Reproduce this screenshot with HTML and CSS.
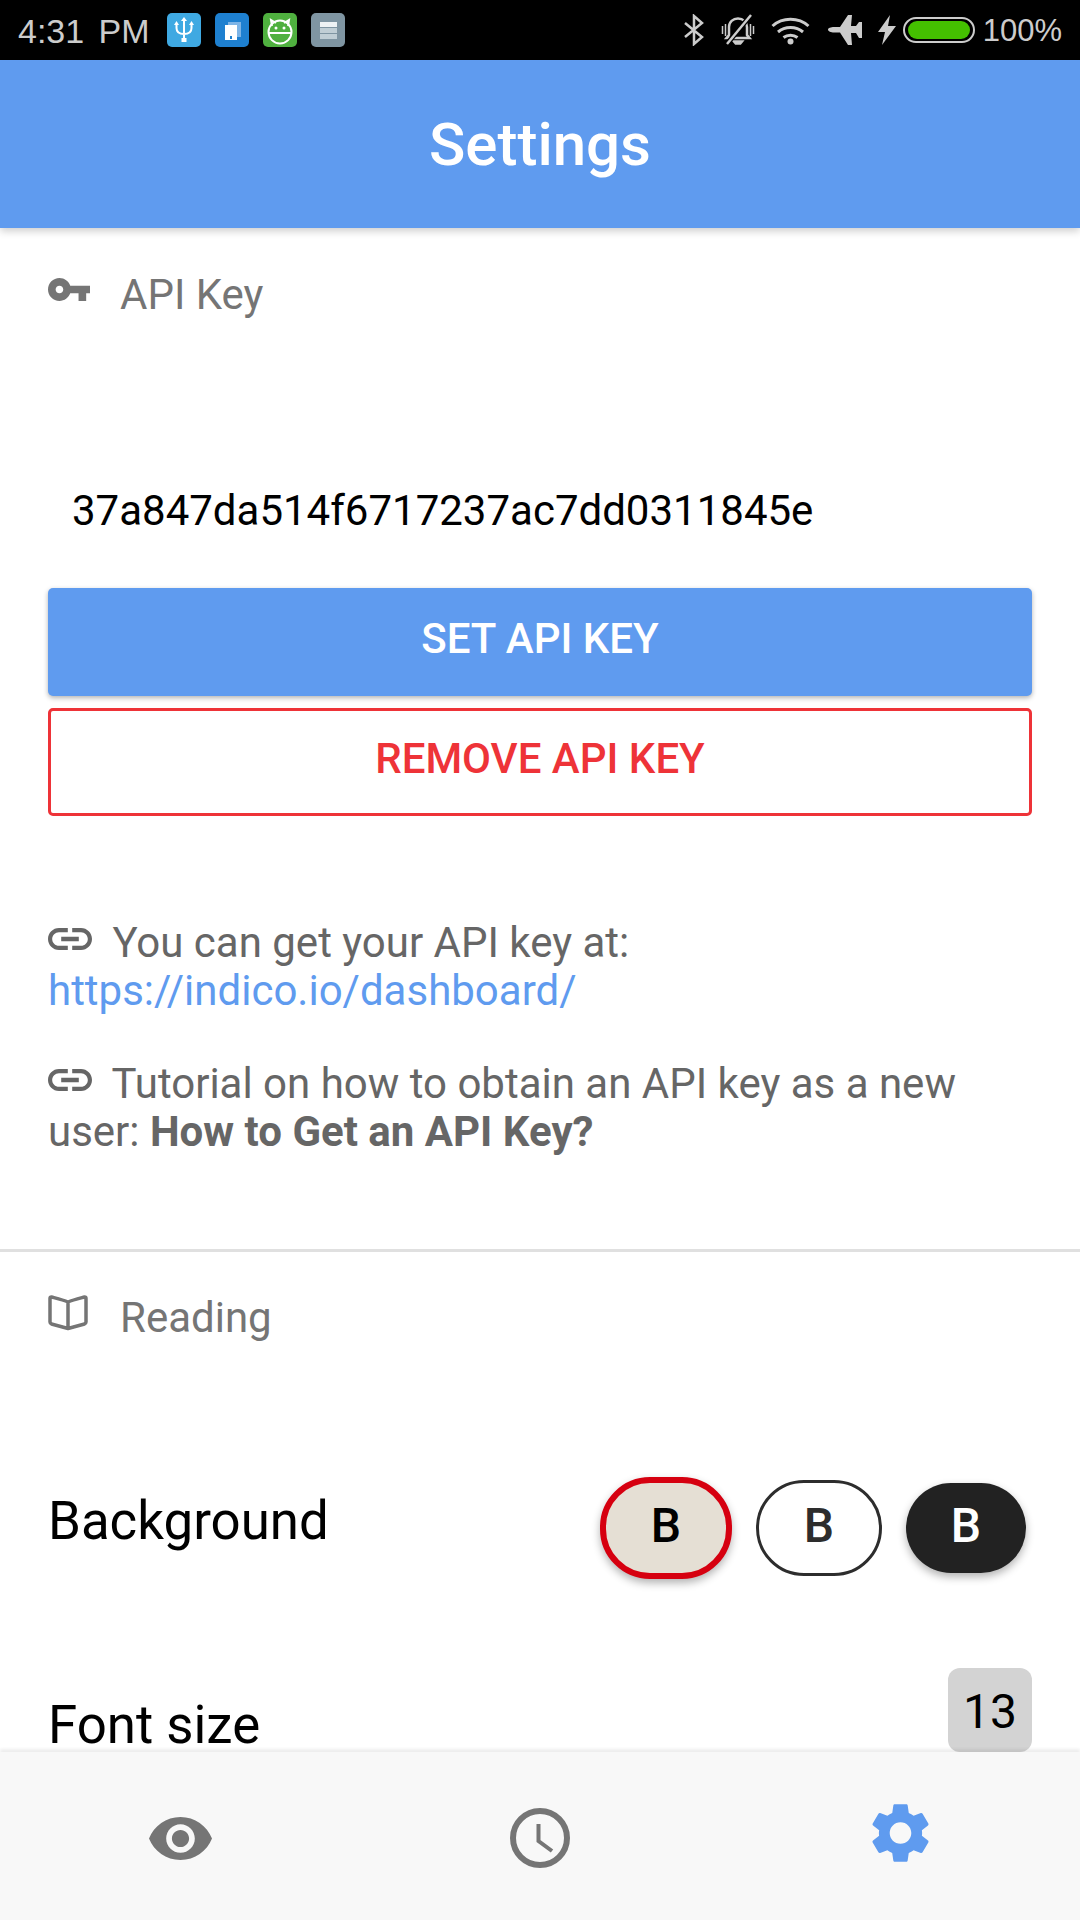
FILE: index.html
```html
<!DOCTYPE html>
<html lang="en">
<head>
    <meta charset="UTF-8">
    <meta name="viewport" content="width=device-width, initial-scale=1.0">
    <title>Settings</title>
    <link rel="stylesheet" href="styles.css">
</head>
<body>
    <div class="statusBar">
        <span class="time">4:31 PM</span>
        <div class="appIcons">
            <svg class="appIcon" viewBox="0 0 34 34">
                <rect width="34" height="34" rx="5" fill="#3fa9e2"/>
                <path d="M17 6v22M9.500 11v4c0 4 3 6 7.500 6s7.500-2 7.500-6v-4" fill="none" stroke="#fff" stroke-width="2"/>
                <path d="M17 4l3 4h-6zM9.500 8l2.500 4h-5zM24.500 8l2.500 4h-5z" fill="#fff"/>
                <rect x="14.500" y="25" width="5" height="4" fill="#fff"/>
            </svg>
            <svg class="appIcon" viewBox="0 0 34 34">
                <rect width="34" height="34" rx="5" fill="#1e80d0"/>
                <rect x="13" y="9" width="13" height="15" fill="#7db4e6"/>
                <rect x="10" y="12" width="12" height="15" fill="#fff"/>
                <rect x="15" y="23" width="2" height="3" fill="#1e80d0"/>
            </svg>
            <svg class="appIcon" viewBox="0 0 34 34">
                <rect width="34" height="34" rx="5" fill="#4fb03f"/>
                <circle cx="17" cy="19" r="11.500" fill="none" stroke="#fff" stroke-width="2"/>
                <path d="M9 13L8 7l5 3M25 13l1-6-5 3M6 20h22" fill="none" stroke="#fff" stroke-width="2"/>
                <circle cx="13" cy="15" r="1.500" fill="#fff"/>
                <circle cx="21" cy="15" r="1.500" fill="#fff"/>
            </svg>
            <svg class="appIcon" viewBox="0 0 34 34">
                <rect width="34" height="34" rx="5" fill="#7f95a2"/>
                <rect x="9" y="9" width="17" height="5" fill="#eef2f4"/>
                <rect x="9" y="15" width="17" height="5" fill="#c0ced5"/>
                <rect x="9" y="21" width="17" height="5" fill="#c0ced5"/>
            </svg>
        </div>
        <div class="sysIcons">
            <svg class="bluetooth" viewBox="0 0 20 32"><path d="M1 9l17 14-8 7V2l8 7L1 23" fill="none" stroke="#ccc" stroke-width="2.500"/></svg>
            <svg class="bell" viewBox="0 0 34 32">
                <path d="M8 21v-8c0-5 4-8.500 9-8.500s9 3.500 9 8.500v8l2.500 3h-23z" fill="none" stroke="#ccc" stroke-width="2.500"/>
                <path d="M12 27h10l-2.500 3h-5zM1.500 12v8M4.500 10v12M32.500 12v8M29.500 10v12" fill="#ccc" stroke="#ccc" stroke-width="1.500"/>
                <path d="M5 31L30 1" stroke="#000" stroke-width="5"/>
                <path d="M6 30L30 1" stroke="#ccc" stroke-width="2.500"/>
            </svg>
            <svg class="wifi" viewBox="0 0 39 30">
                <path d="M1.500 11c10-9 26-9 36 0M7 17c7-6 18-6 25 0M12.500 22.500c4-3 10-3 14 0" fill="none" stroke="#ccc" stroke-width="3"/>
                <circle cx="19.500" cy="26.500" r="3" fill="#ccc"/>
            </svg>
            <svg class="plane" viewBox="0 0 34 30">
                <path d="M0 14.500c0-1.500 3-2.500 6-2.500h6L20 0h4l-1 11h5l3-4h3v16h-3l-3-5h-5l1 12h-4l-8-12.500H6c-3 0-6-1-6-3z" fill="#ccc"/>
            </svg>
            <svg class="bolt" viewBox="0 0 18 30"><path d="M12 0L0 17h7L4 30 18 11h-8z" fill="#ccc"/></svg>
            <div class="battery"><div class="batteryFill"></div></div>
            <span class="percent">100%</span>
        </div>
    </div>

    <div class="appBar">Settings</div>

    <div class="page">
        <div class="section">
            <div class="sectionHead">
                <svg class="keyIcon" viewBox="1 6 22 12"><path d="M12.650 10C11.830 7.670 9.610 6 7 6c-3.310 0-6 2.690-6 6s2.690 6 6 6c2.610 0 4.830-1.670 5.650-4H17v4h4v-4h2v-4H12.650zM7 14c-1.100 0-2-.9-2-2s.9-2 2-2 2 .9 2 2-.9 2-2 2z"/></svg>
                <span>API Key</span>
            </div>
            <div class="keyValue">37a847da514f6717237ac7dd0311845e</div>
            <button class="btn btnPrimary">SET API KEY</button>
            <button class="btn btnOutline">REMOVE API KEY</button>
            <p class="info first">
                <svg class="linkIcon" viewBox="2 7 20 10"><path d="M3.900 12c0-1.710 1.390-3.100 3.100-3.100h4V7H7c-2.760 0-5 2.240-5 5s2.240 5 5 5h4v-1.900H7c-1.710 0-3.100-1.390-3.100-3.100zM8 13h8v-2H8v2zm9-6h-4v1.900h4c1.710 0 3.100 1.390 3.100 3.100s-1.390 3.100-3.100 3.100h-4V17h4c2.760 0 5-2.240 5-5s-2.240-5-5-5z"/></svg>
                <span>You can get your API key at:</span><br>
                <span class="link">https://indico.io/dashboard/</span>
            </p>
            <p class="info">
                <svg class="linkIcon" viewBox="2 7 20 10"><path d="M3.900 12c0-1.710 1.390-3.100 3.100-3.100h4V7H7c-2.760 0-5 2.240-5 5s2.240 5 5 5h4v-1.900H7c-1.710 0-3.100-1.390-3.100-3.100zM8 13h8v-2H8v2zm9-6h-4v1.900h4c1.710 0 3.100 1.390 3.100 3.100s-1.390 3.100-3.100 3.100h-4V17h4c2.760 0 5-2.240 5-5s-2.240-5-5-5z"/></svg>
                <span>Tutorial on how to obtain an API key as a new</span><br>
                <span>user:</span> <b>How to Get an API Key?</b>
            </p>
        </div>

        <div class="divider"></div>

        <div class="section">
            <div class="sectionHead reading">
                <svg class="bookIcon" viewBox="0 0 40 36"><path d="M20 7C15 5 9 3.500 3.500 2 2.500 2 2 2.500 2 3.500V27c0 1 .5 1.500 1.500 2L20 33.500 36.500 29c1-.5 1.500-1 1.500-2V3.500c0-1-.5-1.500-1.500-1.500C31 3.500 25 5 20 7zm0 0v26" fill="none" stroke="#757575" stroke-width="3.500" stroke-linejoin="round"/></svg>
                <span>Reading</span>
            </div>
            <div class="backgroundRow">
                <span class="rowLabel">Background</span>
                <div class="themes">
                    <div class="theme themeSepia">B</div>
                    <div class="theme themeLight">B</div>
                    <div class="theme themeDark">B</div>
                </div>
            </div>
            <div class="fontRow">
                <span class="rowLabel">Font size</span>
                <div class="fontValue">13</div>
            </div>
        </div>
    </div>

    <div class="bottomNav">
        <div class="navItem">
            <svg class="eyeIcon" viewBox="1 4.500 22 15"><path d="M12 4.500C7 4.500 2.730 7.610 1 12c1.730 4.390 6 7.500 11 7.500s9.270-3.110 11-7.500c-1.730-4.390-6-7.500-11-7.500zM12 17c-2.760 0-5-2.240-5-5s2.240-5 5-5 5 2.240 5 5-2.240 5-5 5zm0-8c-1.660 0-3 1.340-3 3s1.340 3 3 3 3-1.340 3-3-1.340-3-3-3z"/></svg>
        </div>
        <div class="navItem">
            <svg class="clockIcon" viewBox="0 0 60 60">
                <circle cx="30" cy="30" r="27" fill="none" stroke="#757575" stroke-width="6"/>
                <path d="M28.500 16v17L42 43" fill="none" stroke="#757575" stroke-width="4"/>
            </svg>
        </div>
        <div class="navItem gearItem">
            <svg class="gearIcon" viewBox="2.600 2 18.800 20"><path fill-rule="evenodd" d="M19.140 12.940c.04-.3.06-.61.06-.94 0-.32-.02-.64-.07-.94l2.030-1.580c.18-.14.23-.41.12-.61l-1.920-3.320c-.12-.22-.37-.29-.59-.22l-2.390.96c-.5-.38-1.030-.7-1.620-.94l-.36-2.540c-.04-.24-.24-.41-.48-.41h-3.840c-.24 0-.43.17-.47.41l-.36 2.540c-.59.24-1.130.57-1.620.94l-2.390-.96c-.22-.08-.47 0-.59.22L2.740 8.870c-.12.21-.08.47.12.61l2.030 1.580c-.05.3-.09.63-.09.94s.02.64.07.94l-2.030 1.580c-.18.14-.23.41-.12.61l1.920 3.320c.12.22.37.29.59.22l2.390-.96c.5.38 1.030.7 1.620.94l.36 2.540c.05.24.24.41.48.41h3.840c.24 0 .44-.17.47-.41l.36-2.540c.59-.24 1.130-.56 1.620-.94l2.390.96c.22.08.47 0 .59-.22l1.920-3.320c.12-.22.07-.47-.12-.61l-2.010-1.580zM12 15.600c-1.980 0-3.600-1.620-3.600-3.600s1.620-3.600 3.600-3.600 3.600 1.620 3.600 3.600-1.620 3.600-3.600 3.600z"/></svg>
        </div>
    </div>
</body>
</html>
```

FILE: styles.css
```css
body {
    margin: 0;
    width: 1080px;
    height: 1920px;
    overflow: hidden;
    display: flex;
    flex-direction: column;
    background-color: #fff;
    font-family: Roboto, sans-serif;
}

/* status bar */
.statusBar {
    height: 60px;
    flex: none;
    display: flex;
    align-items: center;
    background-color: #000;
    color: #ccc;
    padding: 0 18px;
    box-sizing: border-box;
}
.time {
    width: 149px;
    margin-top: 2px;
    font-family: "Liberation Sans", sans-serif;
    font-size: 34px;
    word-spacing: 5px;
}
.appIcons {
    display: flex;
    gap: 14px;
}
.appIcon {
    width: 34px;
    height: 34px;
}
.sysIcons {
    margin-left: auto;
    display: flex;
    align-items: center;
}
.bluetooth {
    width: 20px;
    height: 32px;
}
.bell {
    width: 34px;
    height: 32px;
    margin-left: 17px;
}
.wifi {
    width: 39px;
    height: 30px;
    margin-left: 16px;
}
.plane {
    width: 34px;
    height: 30px;
    margin-left: 18px;
}
.bolt {
    width: 18px;
    height: 30px;
    margin-left: 16px;
}
.battery {
    width: 72px;
    height: 26px;
    margin-left: 7px;
    box-sizing: border-box;
    border: 2px solid #ccc;
    border-radius: 13px;
    padding: 2px 3px;
}
.batteryFill {
    height: 100%;
    background-color: #44c000;
    border-radius: 10px;
}
.percent {
    margin-left: 8px;
    margin-top: 2px;
    font-family: "Liberation Sans", sans-serif;
    font-size: 31px;
}

/* app bar */
.appBar {
    height: 168px;
    flex: none;
    position: relative;
    display: flex;
    align-items: center;
    justify-content: center;
    background-color: #5f9bef;
    color: #fff;
    font-size: 60px;
    font-weight: 500;
    box-shadow: 0 3px 8px rgba(0, 0, 0, 0.2);
}

/* content */
.page {
    flex: 1;
    min-height: 0;
}
.section {
    padding: 0 48px;
}
.sectionHead {
    display: flex;
    align-items: center;
    height: 48px;
    margin-top: 42px;
    font-size: 42px;
    color: #757575;
}
.keyIcon {
    width: 42px;
    height: 23px;
    margin-right: 30px;
    fill: #757575;
    margin-top: -10px;
}
.bookIcon {
    width: 40px;
    height: 36px;
    margin-right: 32px;
    margin-top: -8px;
}
.reading {
    margin-top: 41px;
}
.keyValue {
    margin-top: 169px;
    padding-left: 24px;
    font-size: 42px;
    line-height: 48px;
    color: #000;
}
.btn {
    display: block;
    width: 100%;
    height: 108px;
    padding: 0 0 8px;
    border-radius: 5px;
    font-family: Roboto, sans-serif;
    font-size: 42px;
    font-weight: 500;
}
.btnPrimary {
    margin-top: 53px;
    border: none;
    background-color: #5f9bef;
    color: #fff;
    box-shadow: 0 2px 5px rgba(0, 0, 0, 0.3);
}
.btnOutline {
    margin-top: 12px;
    border: 3px solid #ee3338;
    background-color: #fff;
    color: #ee3338;
}
.info {
    margin: 45px 0 0;
    font-size: 42px;
    line-height: 48px;
    color: #666;
}
.info.first {
    margin-top: 103px;
}
.linkIcon {
    width: 44px;
    height: 22px;
    fill: #666;
    margin-right: 10px;
    vertical-align: 7px;
}
.link {
    color: #5f9bef;
}
.divider {
    height: 3px;
    margin-top: 93px;
    background-color: #e0e0e0;
}
.rowLabel {
    font-size: 52.800px;
    line-height: 52px;
    color: #000;
}
.backgroundRow {
    display: flex;
    align-items: center;
    justify-content: space-between;
    margin-top: 136px;
    height: 102px;
}
.backgroundRow .rowLabel {
    margin-bottom: 14px;
}
.themes {
    display: flex;
    align-items: center;
    gap: 24px;
    margin-right: 6px;
}
.theme {
    display: flex;
    align-items: center;
    justify-content: center;
    box-sizing: border-box;
    border-radius: 50px;
    padding-bottom: 6px;
    font-size: 48px;
    font-weight: 500;
}
.themeSepia {
    width: 132px;
    height: 102px;
    border: 6px solid #d60010;
    background-color: #e5dfd4;
    color: #000;
    box-shadow: 0 4px 8px rgba(0, 0, 0, 0.3);
}
.themeLight {
    width: 126px;
    height: 96px;
    border: 3px solid #2d2d2d;
    background-color: #fff;
    color: #2d2d2d;
}
.themeDark {
    width: 120px;
    height: 90px;
    background-color: #222;
    color: #fff;
    box-shadow: 0 4px 8px rgba(0, 0, 0, 0.3);
}
.fontRow {
    display: flex;
    align-items: flex-start;
    justify-content: space-between;
    margin-top: 89px;
}
.fontRow .rowLabel {
    margin-top: 31px;
}
.fontValue {
    width: 84px;
    height: 84px;
    display: flex;
    align-items: center;
    justify-content: center;
    padding-top: 2px;
    box-sizing: border-box;
    border-radius: 12px;
    background-color: #d3d3d3;
    font-size: 48px;
    color: #000;
}

/* bottom nav */
.bottomNav {
    height: 168px;
    flex: none;
    position: relative;
    display: flex;
    background-color: #f8f8f8;
    box-shadow: 0 -3px 3px rgba(0, 0, 0, 0.07);
}
.navItem {
    flex: 1;
    display: flex;
    align-items: center;
    justify-content: center;
    padding-top: 4px;
}
.gearItem {
    padding-top: 0;
    padding-bottom: 6px;
}
.eyeIcon {
    width: 63px;
    height: 43px;
    fill: #757575;
}
.clockIcon {
    width: 60px;
    height: 60px;
}
.gearIcon {
    width: 59px;
    height: 60px;
    fill: #5f9bef;
}
```
